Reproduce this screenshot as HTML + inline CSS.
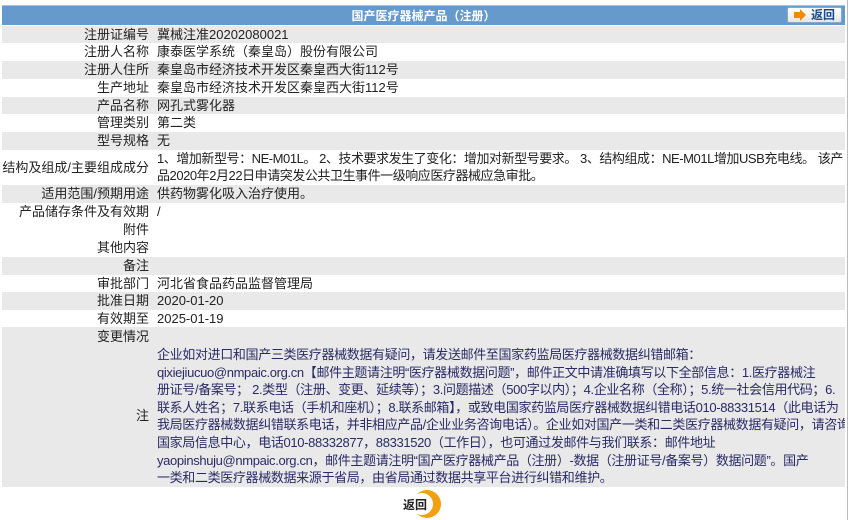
<!DOCTYPE html>
<html><head><meta charset="utf-8"><style>
*{margin:0;padding:0;box-sizing:border-box}
body{width:850px;height:520px;background:#fff;font-family:"Liberation Sans","Noto Sans CJK SC",sans-serif;font-size:13px;color:#222;position:relative;overflow:hidden}
.edge{position:absolute;left:847px;top:0;width:1px;height:520px;background:#bbb}
.hd{position:absolute;left:2px;top:5px;width:843px;height:20px;background:#6699cc;color:#fff;font-weight:bold;font-size:12px;text-align:center;line-height:20px;border-top:1px solid #a9c4e2}
.btn{position:absolute;left:787px;top:7px;width:55px;height:16px;background:linear-gradient(#fff,#e6e6e6);border:1px solid #8aa6c8;border-radius:2px;font-size:12px;font-weight:bold;color:#1a4a8a;line-height:14px;padding-left:23px}
.btn:before{content:"";position:absolute;left:6px;top:3px;width:6px;height:6px;background:#f08a00;margin-top:1px}
.btn:after{content:"";position:absolute;left:12px;top:1px;border-left:6px solid #f08a00;border-top:6px solid transparent;border-bottom:6px solid transparent}
.r{position:absolute;left:2px;width:843px;overflow:hidden;white-space:nowrap}
.g{background:#e9e9e9}
.l{position:absolute;left:0;width:147px;text-align:right;line-height:17px;top:0}
.v{position:absolute;left:155px;line-height:17px;top:0}
.n{color:#2a2a66;line-height:17.6px;letter-spacing:-0.35px}
.rb{position:absolute;left:403px;top:496px;font-weight:bold;font-size:12px;color:#222}
.circ{position:absolute;left:413px;top:490px;width:28px;height:28px;border-radius:50%;background:#f0a010}
.circ2{position:absolute;left:411px;top:493px;width:22px;height:22px;border-radius:50%;background:#fff}
</style></head><body>
<div class="edge"></div>
<div class="hd">国产医疗器械产品（注册）</div>
<div class="btn">返回</div>

<div class="r g" style="top:26px;height:17px"><div class="l">注册证编号</div><div class="v">冀械注准20202080021</div></div>
<div class="r" style="top:43px;height:18px"><div class="l">注册人名称</div><div class="v">康泰医学系统（秦皇岛）股份有限公司</div></div>
<div class="r g" style="top:61px;height:18px"><div class="l">注册人住所</div><div class="v">秦皇岛市经济技术开发区秦皇西大街112号</div></div>
<div class="r" style="top:79px;height:18px"><div class="l">生产地址</div><div class="v">秦皇岛市经济技术开发区秦皇西大街112号</div></div>
<div class="r g" style="top:97px;height:17px"><div class="l">产品名称</div><div class="v">网孔式雾化器</div></div>
<div class="r" style="top:114px;height:18px"><div class="l">管理类别</div><div class="v">第二类</div></div>
<div class="r g" style="top:132px;height:18px"><div class="l">型号规格</div><div class="v">无</div></div>
<div class="r" style="top:150px;height:35px"><div class="l" style="top:9px">结构及组成/主要组成成分</div><div class="v" style="letter-spacing:-0.45px">1、增加新型号：NE-M01L。 2、技术要求发生了变化：增加对新型号要求。 3、结构组成：NE-M01L增加USB充电线。 该产<br>品2020年2月22日申请突发公共卫生事件一级响应医疗器械应急审批。</div></div>
<div class="r g" style="top:185px;height:18px"><div class="l">适用范围/预期用途</div><div class="v">供药物雾化吸入治疗使用。</div></div>
<div class="r" style="top:203px;height:18px"><div class="l">产品储存条件及有效期</div><div class="v">/</div></div>
<div class="r" style="top:221px;height:18px"><div class="l">附件</div></div>
<div class="r" style="top:239px;height:18px"><div class="l">其他内容</div></div>
<div class="r g" style="top:257px;height:18px"><div class="l">备注</div></div>
<div class="r" style="top:275px;height:17px"><div class="l">审批部门</div><div class="v">河北省食品药品监督管理局</div></div>
<div class="r g" style="top:292px;height:18px"><div class="l">批准日期</div><div class="v">2020-01-20</div></div>
<div class="r" style="top:310px;height:17px"><div class="l">有效期至</div><div class="v">2025-01-19</div></div>
<div class="r g" style="top:327px;height:19px"><div class="l" style="top:1px">变更情况</div></div>
<div class="r g" style="top:346px;height:141px"><div class="l" style="top:61px">注</div><div class="v n">企业如对进口和国产三类医疗器械数据有疑问，请发送邮件至国家药监局医疗器械数据纠错邮箱：<br>qixiejiucuo@nmpaic.org.cn【邮件主题请注明“医疗器械数据问题”，邮件正文中请准确填写以下全部信息：1.医疗器械注<br>册证号/备案号； 2.类型（注册、变更、延续等）；3.问题描述（500字以内）；4.企业名称（全称）；5.统一社会信用代码；6.<br>联系人姓名；7.联系电话（手机和座机）；8.联系邮箱】，或致电国家药监局医疗器械数据纠错电话010-88331514（此电话为<br>我局医疗器械数据纠错联系电话，并非相应产品/企业业务咨询电话）。企业如对国产一类和二类医疗器械数据有疑问，请咨询<br>国家局信息中心，电话010-88332877，88331520（工作日），也可通过发邮件与我们联系：邮件地址<br>yaopinshuju@nmpaic.org.cn，邮件主题请注明“国产医疗器械产品（注册）-数据（注册证号/备案号）数据问题”。国产<br>一类和二类医疗器械数据来源于省局，由省局通过数据共享平台进行纠错和维护。</div></div>

<div class="circ"></div><div class="circ2"></div>
<div class="rb">返回</div>
</body></html>
